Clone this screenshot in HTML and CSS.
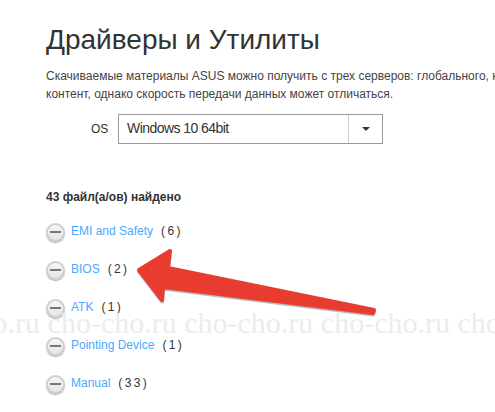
FILE: index.html
```html
<!DOCTYPE html>
<html lang="ru">
<head>
    <meta charset="UTF-8">
    <title>Драйверы и Утилиты</title>
    <link rel="stylesheet" href="styles.css">
</head>
<body>
    <div class="content">
        <h1>Драйверы и Утилиты</h1>
        <p class="intro">Скачиваемые материалы ASUS можно получить с трех серверов: глобального, к<br>контент, однако скорость передачи данных может отличаться.</p>

        <div class="os-row">
            <span class="os-label">OS</span>
            <div class="os-select">
                <span class="os-value">Windows 10 64bit</span>
                <span class="os-button"><span class="caret"></span></span>
            </div>
        </div>

        <h2>43 файл(а/ов) найдено</h2>

        <ul class="files">
            <li><span class="toggle"></span><a href="#">EMI and Safety</a><span class="count">( 6 )</span></li>
            <li><span class="toggle"></span><a href="#">BIOS</a><span class="count">( 2 )</span></li>
            <li><span class="toggle"></span><a href="#">ATK</a><span class="count">( 1 )</span></li>
            <li><span class="toggle"></span><a href="#">Pointing Device</a><span class="count">( 1 )</span></li>
            <li><span class="toggle"></span><a href="#">Manual</a><span class="count">( 3 3 )</span></li>
        </ul>
    </div>

    <!-- Wasserzeichen -->
    <div class="watermark">cho-cho.ru cho-cho.ru cho-cho.ru cho-cho.ru cho-cho.ru</div>

    <!-- Pfeil -->
    <svg class="arrow" width="495" height="412" viewBox="0 0 495 412">
        <path class="arrow-shadow" d="M139 270 L170 251 L168 268 L374 310 L373 313 L163 287 L162 300 Z"/>
        <path class="arrow-body" d="M139 270 L170 251 L168 268 L374 310 L373 313 L163 287 L162 300 Z"/>
    </svg>
</body>
</html>
```

FILE: styles.css
```css
* {
    margin: 0;
    padding: 0;
    box-sizing: border-box;
}

body {
    position: relative;
    width: 495px;
    height: 412px;
    overflow: hidden;
    background: #ffffff;
    color: #333333;
    font-family: "Liberation Sans", Arial, sans-serif;
}

.content {
    padding: 22px 0 0 46px;
}

h1 {
    font-size: 28px;
    font-weight: 400;
    line-height: 36px;
    color: #333333;
}

.intro {
    margin-top: 9px;
    font-size: 12px;
    line-height: 18px;
    color: #444444;
    white-space: nowrap;
}

/* OS Auswahl */
.os-row {
    display: flex;
    align-items: center;
    margin-top: 11px;
    padding-left: 45px;
}

.os-label {
    width: 27px;
    font-size: 12px;
}

.os-select {
    display: flex;
    width: 265px;
    height: 30px;
    border: 1px solid #999999;
}

.os-value {
    flex-grow: 1;
    padding-left: 8px;
    font-size: 14px;
    line-height: 27px;
    letter-spacing: -0.55px;
}

.os-button {
    display: flex;
    align-items: center;
    justify-content: center;
    width: 34px;
    border-left: 1px solid #cccccc;
}

.caret {
    width: 0;
    height: 0;
    border-left: 4px solid transparent;
    border-right: 4px solid transparent;
    border-top: 4px solid #333333;
}

h2 {
    margin-top: 45px;
    font-size: 12px;
    font-weight: 700;
    line-height: 16px;
}

/* Dateiliste */
.files {
    list-style: none;
    margin-top: 7px;
}

.files li {
    display: flex;
    align-items: center;
    height: 38px;
    font-size: 12px;
}

.toggle {
    position: relative;
    width: 19px;
    height: 19px;
    margin-top: 2px;
    margin-right: 6px;
    border: 2px solid #cfcfcf;
    border-radius: 50%;
    background: linear-gradient(#f6f6f6, #e6e6e6);
    box-shadow: 0 1px 1px #a8a8a8;
}

.toggle::after {
    content: "";
    position: absolute;
    top: 6px;
    left: 2px;
    width: 11px;
    height: 2px;
    background: #777777;
}

.files a {
    color: #4aa8ff;
    text-decoration: none;
}

.count {
    margin-left: 8px;
    word-spacing: -1px;
}

.watermark {
    position: absolute;
    top: 303px;
    left: -89px;
    font-family: "Liberation Serif", serif;
    font-size: 30px;
    line-height: 40px;
    color: #ececec;
    white-space: nowrap;
}

.arrow {
    position: absolute;
    top: 0;
    left: 0;
}

.arrow-body {
    fill: #e83c30;
    stroke: #e83c30;
    stroke-width: 4;
    stroke-linejoin: round;
}

.arrow-shadow {
    fill: #bbbbbb;
    stroke: #bbbbbb;
    stroke-width: 4;
    stroke-linejoin: round;
    transform: translate(0, 1.5px);
}
```
